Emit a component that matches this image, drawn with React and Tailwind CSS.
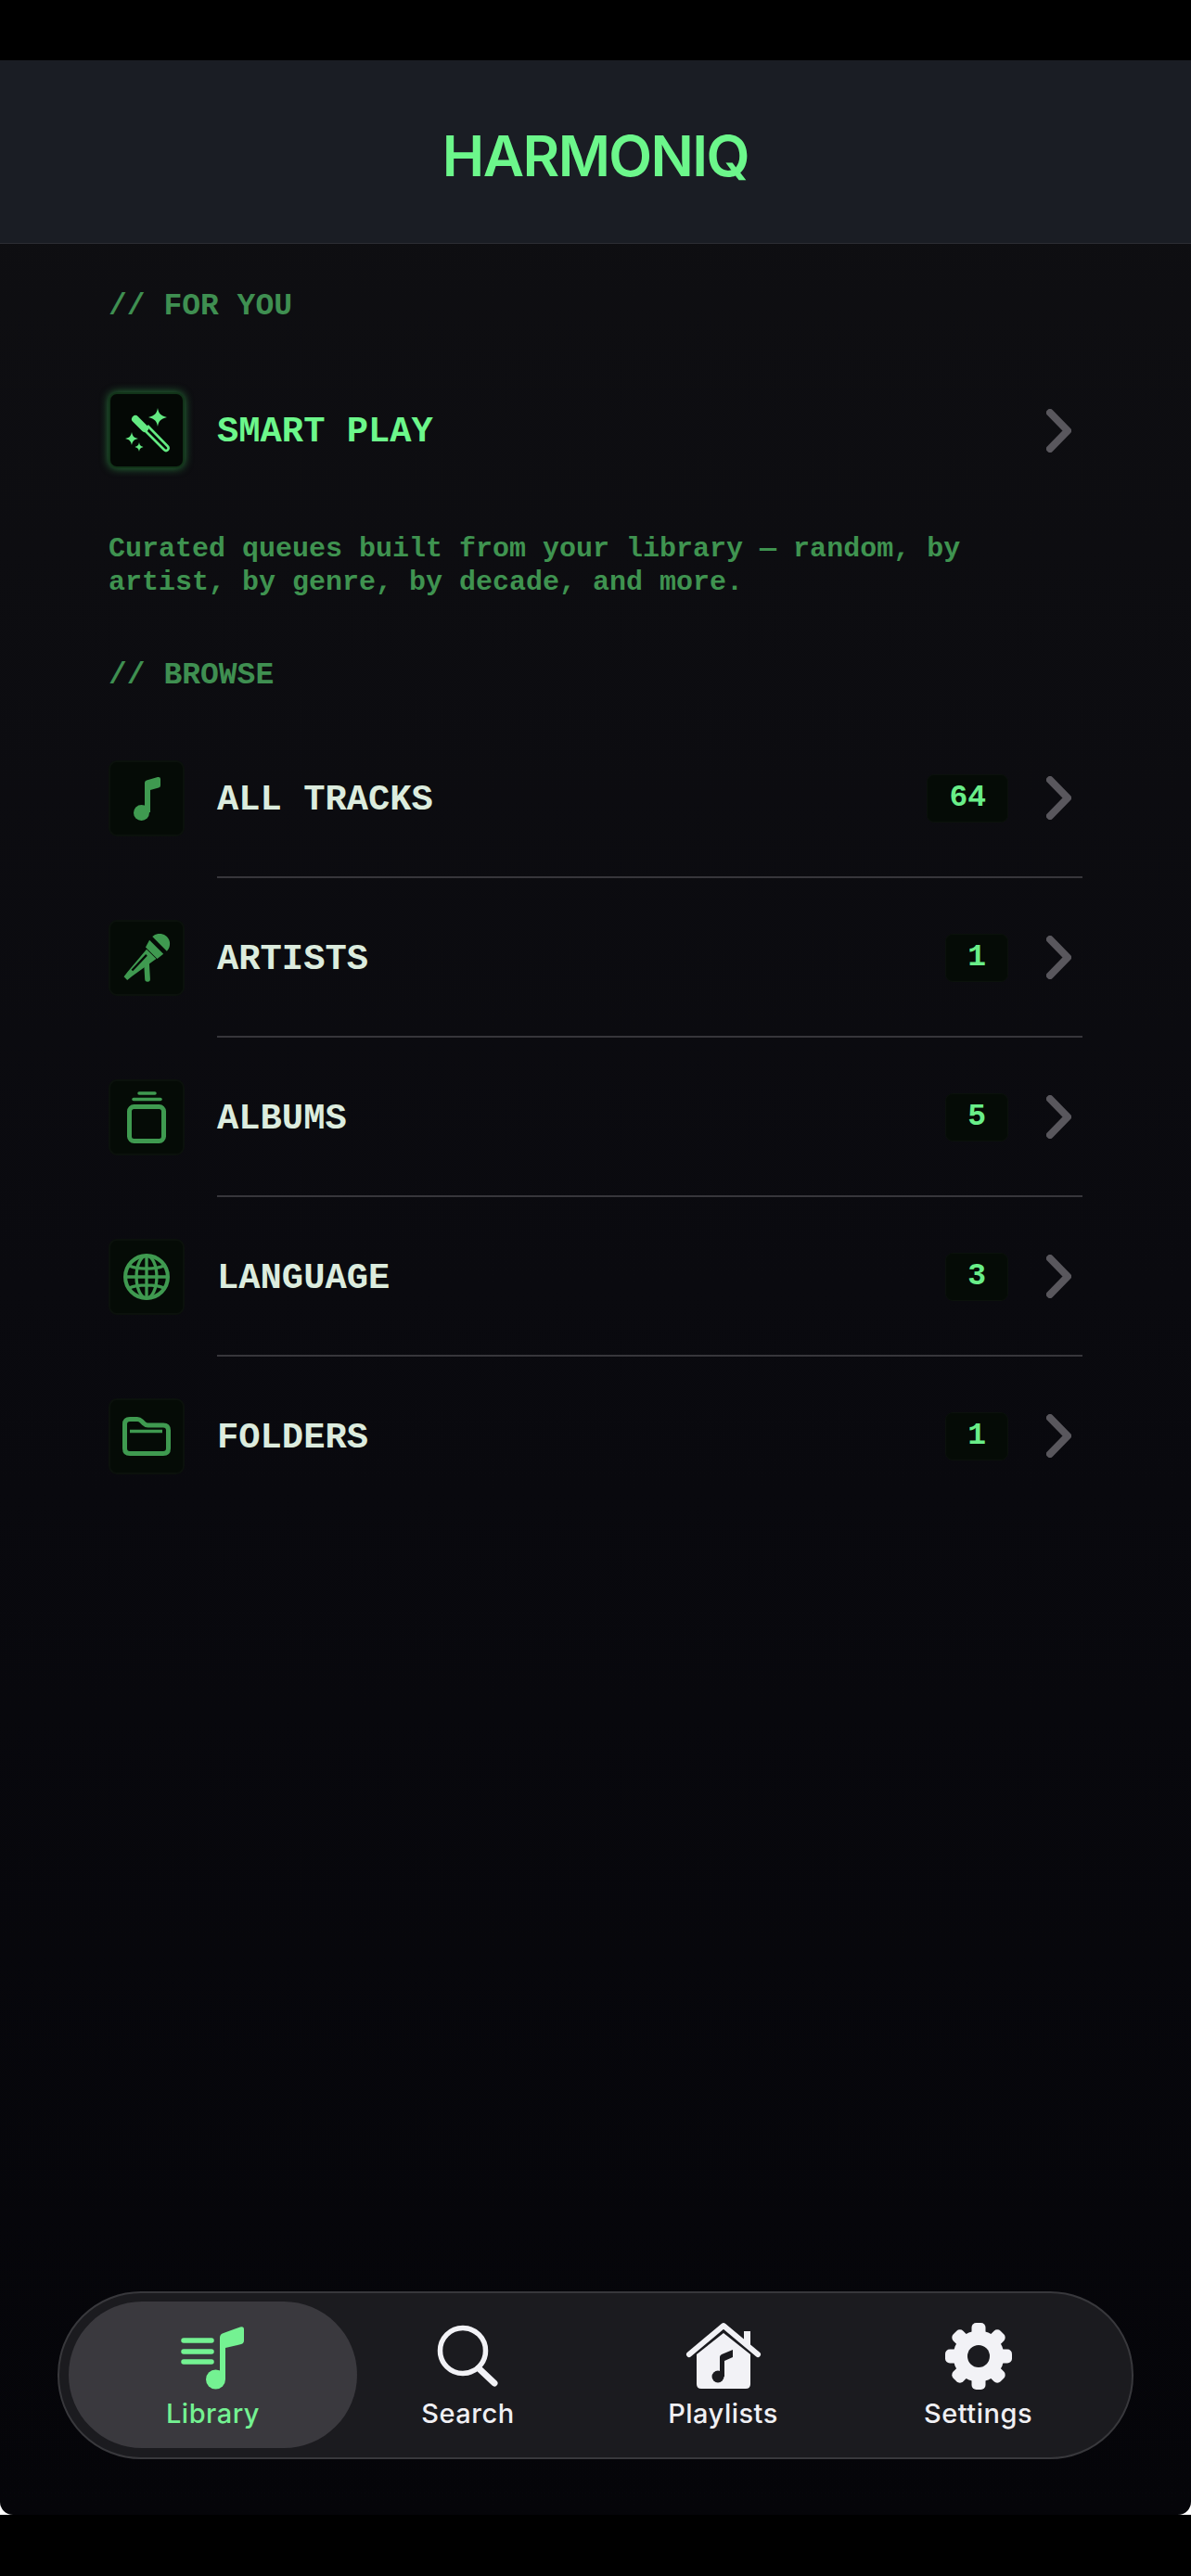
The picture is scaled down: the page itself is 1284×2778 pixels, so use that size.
import React from "react";

const mono = "font-['Liberation_Mono',monospace]";

function WandIcon() {
    return (
        <svg width="50" height="50" viewBox="0 0 50 50" fill="none">
            <path d="M13 13 L23 23" stroke="#63ea82" strokeWidth="8" strokeLinecap="round" />
            <path d="M22 24 L44 46 Q46 48 48 46 Q49.5 44 47.5 42 L26 20" stroke="#63ea82" strokeWidth="2.6" strokeLinejoin="round" />
            <path d="M37 1 C38 7 40 9 47 11 C40 13 38 15 37 21 C36 15 34 13 27 11 C34 9 36 7 37 1 Z" fill="#63ea82" />
            <path d="M9 27 C10 31 11 33 16 34 C11 35 10 37 9 41 C8 37 7 35 2 34 C7 33 8 31 9 27 Z" fill="#63ea82" />
            <path d="M17 38 C17.6 41 18.4 42 21.5 43 C18.4 44 17.6 45 17 48 C16.4 45 15.6 44 12.5 43 C15.6 42 16.4 41 17 38 Z" fill="#63ea82" />
        </svg>
    );
}

function NoteIcon() {
    return (
        <svg width="30" height="48" viewBox="0 0 30 48" fill="#3f9a50">
            <circle cx="9.5" cy="39.5" r="8.5" />
            <path d="M13 39 V7 Q13 5 15 4.5 L27 1 Q30 0.5 30 3 V10 Q30 12 28 12.5 L19 15 V39 Z" />
        </svg>
    );
}

function MicIcon() {
    return (
        <svg width="52" height="52" viewBox="0 0 50 50" fill="none">
            <path d="M31 3 A10.5 10.5 0 0 1 46 18 Z" fill="#3f9a50" />
            <path d="M28 6.5 L42.5 21 L36 26 L24 14 Z" fill="#3f9a50" />
            <path d="M25 16 L35 26 L10 44 L5 48 L1.5 44.5 L5 40 Z" fill="#3f9a50" />
            <path d="M10 38 L25 22" stroke="#050a06" strokeWidth="2.2" />
            <path d="M25 30 L26 47" stroke="#3f9a50" strokeWidth="5.5" strokeLinecap="round" />
        </svg>
    );
}

function AlbumsIcon() {
    return (
        <svg width="42" height="56" viewBox="0 0 42 56" fill="none" stroke="#3f9a50">
            <path d="M13 2 H30" strokeWidth="3.5" strokeLinecap="round" />
            <path d="M7 8.5 H36" strokeWidth="3.5" strokeLinecap="round" />
            <rect x="2.5" y="16.5" width="37" height="37" rx="5" strokeWidth="5" />
        </svg>
    );
}

function GlobeIcon() {
    return (
        <svg width="50" height="50" viewBox="0 0 48 48" fill="none" stroke="#3f9a50" strokeWidth="3.2">
            <circle cx="24" cy="24" r="22" strokeWidth="4" />
            <ellipse cx="24" cy="24" rx="10.5" ry="22" />
            <path d="M24 2 V46 M2 24 H46 M6 12.5 C15 16.5 33 16.5 42 12.5 M6 35.5 C15 31.5 33 31.5 42 35.5" />
        </svg>
    );
}

function FolderIcon() {
    return (
        <svg width="52" height="42" viewBox="0 0 52 42" fill="none" stroke="#3f9a50" strokeLinejoin="round">
            <path d="M2.5 8 Q2.5 2.5 8 2.5 H16 Q18.5 2.5 20.5 4.5 L23 7 Q25 9 27.5 9 H44 Q49.5 9 49.5 14.5 V34 Q49.5 39.5 44 39.5 H8 Q2.5 39.5 2.5 34 Z" strokeWidth="5" />
            <path d="M8 15.5 H43" strokeWidth="3.4" />
        </svg>
    );
}

function Chevron() {
    return (
        <svg width="27" height="47" viewBox="0 0 27 47" fill="none" className="shrink-0">
            <path d="M4 4 L23 23.5 L4 43" stroke="#59575d" strokeWidth="8" strokeLinecap="round" strokeLinejoin="round" />
        </svg>
    );
}

function LibraryIcon() {
    return (
        <svg width="80" height="80" viewBox="0 0 80 80" fill="#74f292">
            <path d="M8 23 H38 M8 35 H38 M8 46 H38" stroke="#74f292" strokeWidth="5.5" strokeLinecap="round" />
            <circle cx="42.5" cy="65" r="10.5" />
            <path d="M47 65 V20 Q47 16 51 15 L69 8.5 Q73 7.5 73 11 V23 Q73 26 70 27 L53 31 V65 Z" />
        </svg>
    );
}

function SearchIcon() {
    return (
        <svg width="70" height="72" viewBox="0 0 70 72" fill="none" stroke="#f2f2f6" strokeLinecap="round">
            <circle cx="29" cy="30" r="24.5" strokeWidth="5.5" />
            <path d="M46 49 L63 65" strokeWidth="7" />
        </svg>
    );
}

function PlaylistsIcon() {
    return (
        <svg width="90" height="80" viewBox="0 0 90 80">
            <path d="M16 70 Q16 75 21 75 H69 Q74 75 74 70 V38 L45 15 L16 38 Z" fill="#f2f2f6" />
            <path d="M8 38 L45 7 L82 38" fill="none" stroke="#f2f2f6" strokeWidth="6" strokeLinecap="round" strokeLinejoin="round" />
            <rect x="67" y="13" width="7" height="16" fill="#f2f2f6" />
            <circle cx="39" cy="62" r="6.5" fill="#1b1b1f" />
            <path d="M41 62 V41 Q41 39 43 38 L55 33 V41 L46 45 V62 Z" fill="#1b1b1f" />
        </svg>
    );
}

function SettingsIcon() {
    const teeth = [0, 45, 90, 135, 180, 225, 270, 315];
    return (
        <svg width="72" height="72" viewBox="0 0 72 72" fill="#f2f2f6">
            <circle cx="36" cy="36" r="27.5" />
            {teeth.map((a) => (
                <rect key={a} x="28.5" y="0" width="15" height="20" rx="5" transform={`rotate(${a} 36 36)`} />
            ))}
            <circle cx="36" cy="36" r="12" fill="#1b1b1f" />
        </svg>
    );
}

function IconBox({ glow, children }) {
    return (
        <div
            className={
                glow
                    ? "w-[82px] h-[82px] shrink-0 rounded-[9px] bg-[#040805] border-2 border-[#123319] shadow-[0_0_10px_#2a7a3d] flex items-center justify-center"
                    : "w-[82px] h-[82px] shrink-0 rounded-[9px] bg-[#050b06] border-2 border-[#0b110c] flex items-center justify-center"
            }
        >
            {children}
        </div>
    );
}

function Row({ icon, label, count, last }) {
    return (
        <div className="flex items-center h-[172px]">
            <IconBox>{icon}</IconBox>
            <div className={`flex-1 h-full ml-[35px] flex items-center pr-[12px] border-b-2 ${last ? "border-transparent" : "border-[#37363b]"}`}>
                <span className={`flex-1 mt-[7px] ${mono} font-bold text-[38.8px] text-[#dcecde]`}>{label}</span>
                <span className={`h-[52px] mt-[2px] px-[23px] flex items-center rounded-[8px] bg-[#050b06] border border-[#0b110c] ${mono} font-bold text-[33px] text-[#69ee88]`}>
                    {count}
                </span>
                <div className="ml-[41px] flex"><Chevron /></div>
            </div>
        </div>
    );
}

function NavItem({ icon, label, active }) {
    return (
        <div
            className={
                active
                    ? "w-[275px] -mx-[18px] box-content px-[18px] rounded-[79px] bg-[#3a393e] flex flex-col items-center pt-[23px] h-[135px] relative"
                    : "w-[275px] flex flex-col items-center pt-[23px] h-[135px] relative"
            }
        >
            <div className="h-[72px] flex items-center justify-center">{icon}</div>
            <span className={`mt-[8px] font-['Inter',sans-serif] font-medium text-[29px] leading-[36px] tracking-[0.5px] ${active ? "text-[#74f292]" : "text-[#f0f0f4]"}`}>
                {label}
            </span>
        </div>
    );
}

export default function App() {
    return (
        <div className="w-[1284px] h-[2778px] bg-black flex flex-col">
            <div className="h-[65px] shrink-0"></div>
            <div className="h-[2647px] bg-white shrink-0">
                <div className="h-full rounded-b-[14px] overflow-hidden flex flex-col bg-gradient-to-b from-[#0f0f12] via-[#0a0a0f] to-[#050509]">
                    <header className="h-[198px] shrink-0 pt-[10px] bg-[#1a1d24] border-b border-[#2c2d33] flex items-center justify-center">
                        <h1 className="font-['Inter',sans-serif] font-semibold text-[61px] tracking-[-1.6px] text-[#6cf78b]">HARMONIQ</h1>
                    </header>

                    <main className="flex-1 px-[117px] pt-[48px] flex flex-col">
                        <div className={`${mono} font-bold text-[33px] leading-[40px] text-[#3f8f51]`}>// FOR YOU</div>

                        <div className="flex items-center mt-[72px]">
                            <IconBox glow><WandIcon /></IconBox>
                            <span className={`flex-1 mt-[5px] ml-[35px] ${mono} font-bold text-[38.8px] text-[#6cf78b]`}>SMART PLAY</span>
                            <div className="mr-[12px] flex"><Chevron /></div>
                        </div>

                        <p className={`mt-[69px] ${mono} font-bold text-[30px] leading-[36px] text-[#3f9350]`}>
                            Curated queues built from your library — random, by
                            <br />
                            artist, by genre, by decade, and more.
                        </p>

                        <div className={`mt-[63px] ${mono} font-bold text-[33px] leading-[40px] text-[#3f8f51]`}>// BROWSE</div>

                        <div className="mt-[26px] flex flex-col">
                            <Row icon={<NoteIcon />} label="ALL TRACKS" count="64" />
                            <Row icon={<MicIcon />} label="ARTISTS" count="1" />
                            <Row icon={<AlbumsIcon />} label="ALBUMS" count="5" />
                            <Row icon={<GlobeIcon />} label="LANGUAGE" count="3" />
                            <Row icon={<FolderIcon />} label="FOLDERS" count="1" last />
                        </div>
                    </main>

                    <nav className="shrink-0 mx-[62px] mb-[60px] h-[181px] rounded-[90px] bg-[#1b1b1f] border-2 border-[#38383c] px-[28px] py-[9px] flex">
                        <NavItem icon={<LibraryIcon />} label="Library" active />
                        <NavItem icon={<SearchIcon />} label="Search" />
                        <NavItem icon={<PlaylistsIcon />} label="Playlists" />
                        <NavItem icon={<SettingsIcon />} label="Settings" />
                    </nav>
                </div>
            </div>
            <div className="flex-1"></div>
        </div>
    );
}
